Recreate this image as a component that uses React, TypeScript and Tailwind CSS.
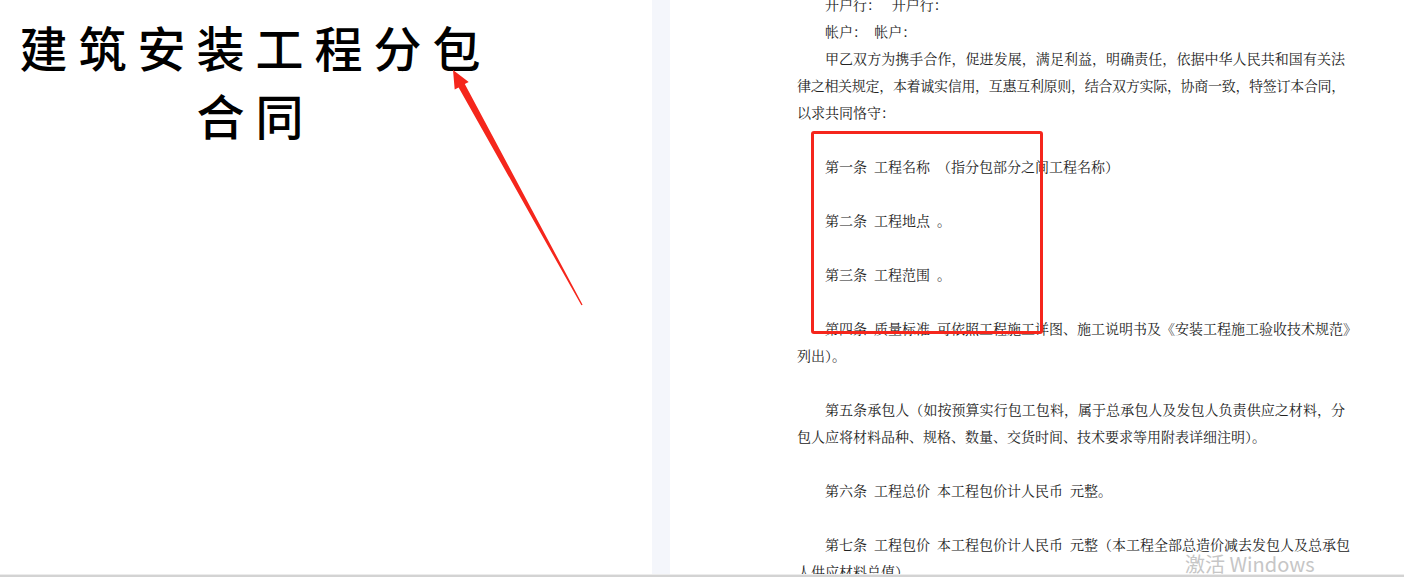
import React from "react";

type Row = { text: string; indent?: boolean; justify?: boolean; tight?: boolean } | null;

const sp = "\u2002";

const rows: Row[] = [
  { text: "开户行：\u00a0\u00a0\u00a0开户行：", indent: true },
  { text: "帐户：\u00a0\u00a0帐户：", indent: true },
  { text: "甲乙双方为携手合作，促进发展，满足利益，明确责任，依据中华人民共和国有关法", indent: true, justify: true },
  { text: "律之相关规定，本着诚实信用，互惠互利原则，结合双方实际，协商一致，特签订本合同，", justify: true, tight: true },
  { text: "以求共同恪守：" },
  null,
  { text: `第一条${sp}工程名称${sp}（指分包部分之间工程名称）`, indent: true },
  null,
  { text: `第二条${sp}工程地点${sp}。`, indent: true },
  null,
  { text: `第三条${sp}工程范围${sp}。`, indent: true },
  null,
  { text: `第四条${sp}质量标准${sp}可依照工程施工详图、施工说明书及《安装工程施工验收技术规范》`, indent: true },
  { text: "列出）。" },
  null,
  { text: "第五条承包人（如按预算实行包工包料，属于总承包人及发包人负责供应之材料，分", indent: true, justify: true },
  { text: "包人应将材料品种、规格、数量、交货时间、技术要求等用附表详细注明）。" },
  null,
  { text: `第六条${sp}工程总价${sp}本工程包价计人民币${sp}元整。`, indent: true },
  null,
  { text: `第七条${sp}工程包价${sp}本工程包价计人民币${sp}元整（本工程全部总造价减去发包人及总承包`, indent: true, justify: true },
  { text: "人供应材料总值）。" },
];

function DocLine({ row }: { row: Row }) {
  if (!row) return <div className="h-[27px]" />;
  return (
    <div
      className={`h-[27px] whitespace-nowrap ${row.indent ? "pl-[28px]" : ""} ${
        row.justify ? "text-justify [text-align-last:justify]" : ""
      } ${row.tight ? "tracking-[-0.3px]" : ""}`}
    >
      {row.text}
    </div>
  );
}

export default function App() {
  return (
    <div className="relative w-[1404px] h-[577px] overflow-hidden bg-white">
      <div className="flex h-[574px]">
        {/* Left page: title */}
        <div className="w-[652px] bg-white">
          <div className="w-[511px] pt-[12px] text-center text-[48px] leading-[68px] tracking-[11px] font-medium text-black font-['Noto_Sans_CJK_SC','Noto_Sans',sans-serif]">
            <div>建筑安装工程分包</div>
            <div>合同</div>
          </div>
        </div>

        {/* Gap between pages */}
        <div className="w-[18px] bg-[#f4f6fb]" />

        {/* Right page: contract text */}
        <div className="flex-1 overflow-hidden bg-white">
          <div className="-mt-[9px] ml-[127px] w-[548px] text-[14px] leading-[27px] text-[#222] font-['Noto_Serif_CJK_SC','Noto_Sans_CJK_SC','Liberation_Serif',serif]">
            {rows.map((row, i) => (
              <DocLine key={i} row={row} />
            ))}
          </div>
        </div>
      </div>

      {/* Bottom edge */}
      <div className="h-[1px] bg-[#ececec]" />
      <div className="h-[2px] bg-[#d3d3d3]" />

      {/* Annotation: red box */}
      <div className="absolute left-[811px] top-[131px] w-[232px] h-[203px] border-[3px] border-[#f5261c] rounded-[3px]" />

      {/* Annotation: red arrow */}
      <svg className="absolute left-0 top-0 pointer-events-none" width="1404" height="577">
        <polygon
          points="453,70 468.7,82 464.8,84.1 582.6,304.7 581.4,305.3 458.6,87.5 454.7,89.6"
          fill="#f5261c"
        />
      </svg>

      {/* Watermark */}
      <div className="absolute left-[1185px] top-[554px] text-[20px] leading-[20px] text-[#c6c6c6] font-['Noto_Sans_CJK_SC','Noto_Sans',sans-serif]">
        激活 Windows
      </div>
    </div>
  );
}
